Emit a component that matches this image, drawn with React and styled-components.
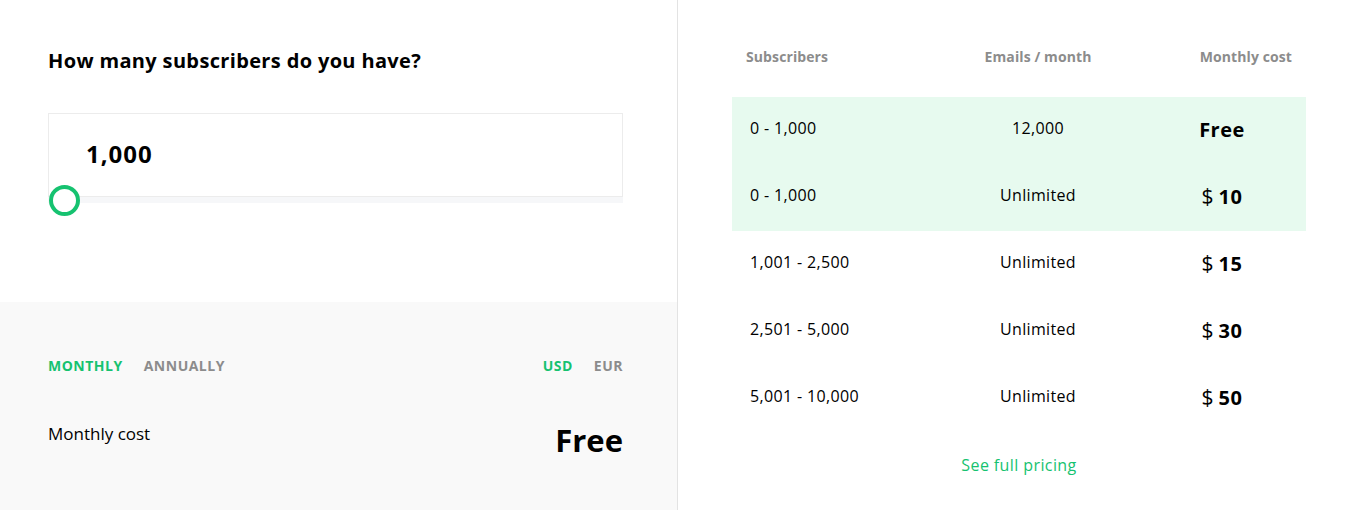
import styled, { createGlobalStyle } from "styled-components";

const GlobalStyle = createGlobalStyle`
  html, body {
    margin: 0;
    padding: 0;
    background: #ffffff;
  }
  body {
    font-family: "Open Sans", Lato, sans-serif;
    color: #000000;
  }
`;

const rows = [
  { subs: "0 - 1,000", emails: "12,000", price: null, active: true },
  { subs: "0 - 1,000", emails: "Unlimited", price: "10", active: true },
  { subs: "1,001 - 2,500", emails: "Unlimited", price: "15" },
  { subs: "2,501 - 5,000", emails: "Unlimited", price: "30" },
  { subs: "5,001 - 10,000", emails: "Unlimited", price: "50" },
];

export default function App() {
  return (
    <>
      <GlobalStyle />
      <StyledPage>
        <StyledCalculator>
          <StyledTop>
            <StyledHeading>How many subscribers do you have?</StyledHeading>
            <StyledInputBox>
              <StyledAmount>1,000</StyledAmount>
            </StyledInputBox>
            <StyledTrack>
              <StyledThumb aria-label="subscribers slider" />
            </StyledTrack>
          </StyledTop>
          <StyledBottom>
            <StyledToggleRow>
              <StyledToggleGroup>
                <StyledToggle active>MONTHLY</StyledToggle>
                <StyledToggle>ANNUALLY</StyledToggle>
              </StyledToggleGroup>
              <StyledToggleGroup>
                <StyledToggle active>USD</StyledToggle>
                <StyledToggle>EUR</StyledToggle>
              </StyledToggleGroup>
            </StyledToggleRow>
            <StyledCostRow>
              <StyledCostLabel>Monthly cost</StyledCostLabel>
              <StyledCostValue>Free</StyledCostValue>
            </StyledCostRow>
          </StyledBottom>
        </StyledCalculator>

        <StyledPricing>
          <StyledTable>
            <StyledHeadRow>
              <StyledHead>Subscribers</StyledHead>
              <StyledHead align="center">Emails / month</StyledHead>
              <StyledHead align="right">Monthly cost</StyledHead>
            </StyledHeadRow>
            {rows.map((row, i) => (
              <StyledRow key={i} active={row.active}>
                <StyledCell>{row.subs}</StyledCell>
                <StyledCell align="center">{row.emails}</StyledCell>
                <StyledPriceCell>
                  {row.price ? (
                    <>
                      <StyledCurrency>$</StyledCurrency>
                      <StyledPrice>{row.price}</StyledPrice>
                    </>
                  ) : (
                    <StyledPrice>Free</StyledPrice>
                  )}
                </StyledPriceCell>
              </StyledRow>
            ))}
            <StyledLink href="#">See full pricing</StyledLink>
          </StyledTable>
        </StyledPricing>
      </StyledPage>
    </>
  );
}

const StyledPage = styled.main`
  display: flex;
  width: 1352px;
  height: 510px;
  overflow: hidden;
`;

const StyledCalculator = styled.section`
  width: 677px;
  border-right: 1px solid #e3e3e3;
  display: flex;
  flex-direction: column;
`;

const StyledTop = styled.div`
  height: 302px;
  box-sizing: border-box;
  padding: 49px 54px 0 48px;
  background: #ffffff;
`;

const StyledHeading = styled.h2`
  margin: 0 0 40px;
  font-size: 20px;
  line-height: 24px;
  font-weight: 700;
  letter-spacing: 0.35px;
`;

const StyledInputBox = styled.div`
  height: 84px;
  box-sizing: border-box;
  border: 1px solid #ececec;
  display: flex;
  align-items: center;
  padding: 0 0 4px 37px;
`;

const StyledAmount = styled.span`
  font-size: 24px;
  font-weight: 700;
  letter-spacing: 1px;
`;

const StyledTrack = styled.div`
  position: relative;
  height: 6px;
  background: #f6f7f9;
`;

const StyledThumb = styled.span`
  position: absolute;
  left: 1px;
  top: -12px;
  width: 31px;
  height: 31px;
  box-sizing: border-box;
  border: 4px solid #16c270;
  border-radius: 50%;
  background: #ffffff;
`;

const StyledBottom = styled.div`
  flex: 1;
  background: #f9f9f9;
  padding: 55px 54px 0 48px;
`;

const StyledToggleRow = styled.div`
  display: flex;
  justify-content: space-between;
`;

const StyledToggleGroup = styled.div`
  display: flex;
  gap: 21px;
`;

const StyledToggle = styled.span`
  font-size: 14px;
  line-height: 18px;
  font-weight: 700;
  letter-spacing: 0.5px;
  color: ${({ active }) => (active ? "#16c270" : "#8c8c8c")};
  cursor: pointer;
`;

const StyledCostRow = styled.div`
  display: flex;
  justify-content: space-between;
  align-items: flex-start;
  margin-top: 47px;
`;

const StyledCostLabel = styled.span`
  font-size: 17px;
  line-height: 20px;
  padding-top: 2px;
`;

const StyledCostValue = styled.span`
  font-size: 31px;
  line-height: 36px;
  font-weight: 700;
`;

const StyledPricing = styled.section`
  flex: 1;
  padding: 48px 0 0 54px;
`;

const StyledTable = styled.div`
  width: 574px;
  display: flex;
  flex-direction: column;
`;

const StyledHeadRow = styled.div`
  display: grid;
  grid-template-columns: 186px 212px 1fr;
  padding: 0 14px;
  margin-bottom: 32px;
`;

const StyledHead = styled.span`
  font-size: 14px;
  line-height: 17px;
  font-weight: 700;
  letter-spacing: 0.1px;
  color: #8c8c8c;
  text-align: ${({ align }) => align || "left"};
`;

const StyledRow = styled.div`
  display: grid;
  grid-template-columns: 182px 212px 156px;
  align-items: center;
  height: 67px;
  padding-left: 18px;
  background: ${({ active }) => (active ? "#e7faef" : "transparent")};
`;

const StyledCell = styled.span`
  font-size: 16px;
  line-height: 20px;
  letter-spacing: 0.35px;
  padding-bottom: 5px;
  text-align: ${({ align }) => align || "left"};
`;

const StyledPriceCell = styled.span`
  display: flex;
  justify-content: center;
  align-items: baseline;
  gap: 5px;
  padding-bottom: 3px;
`;

const StyledCurrency = styled.span`
  font-size: 21px;
`;

const StyledPrice = styled.span`
  font-size: 20px;
  font-weight: 700;
  letter-spacing: 0.5px;
`;

const StyledLink = styled.a`
  align-self: center;
  margin-top: 23px;
  font-size: 16px;
  line-height: 20px;
  letter-spacing: 0.4px;
  color: #16c270;
  text-decoration: none;
`;
